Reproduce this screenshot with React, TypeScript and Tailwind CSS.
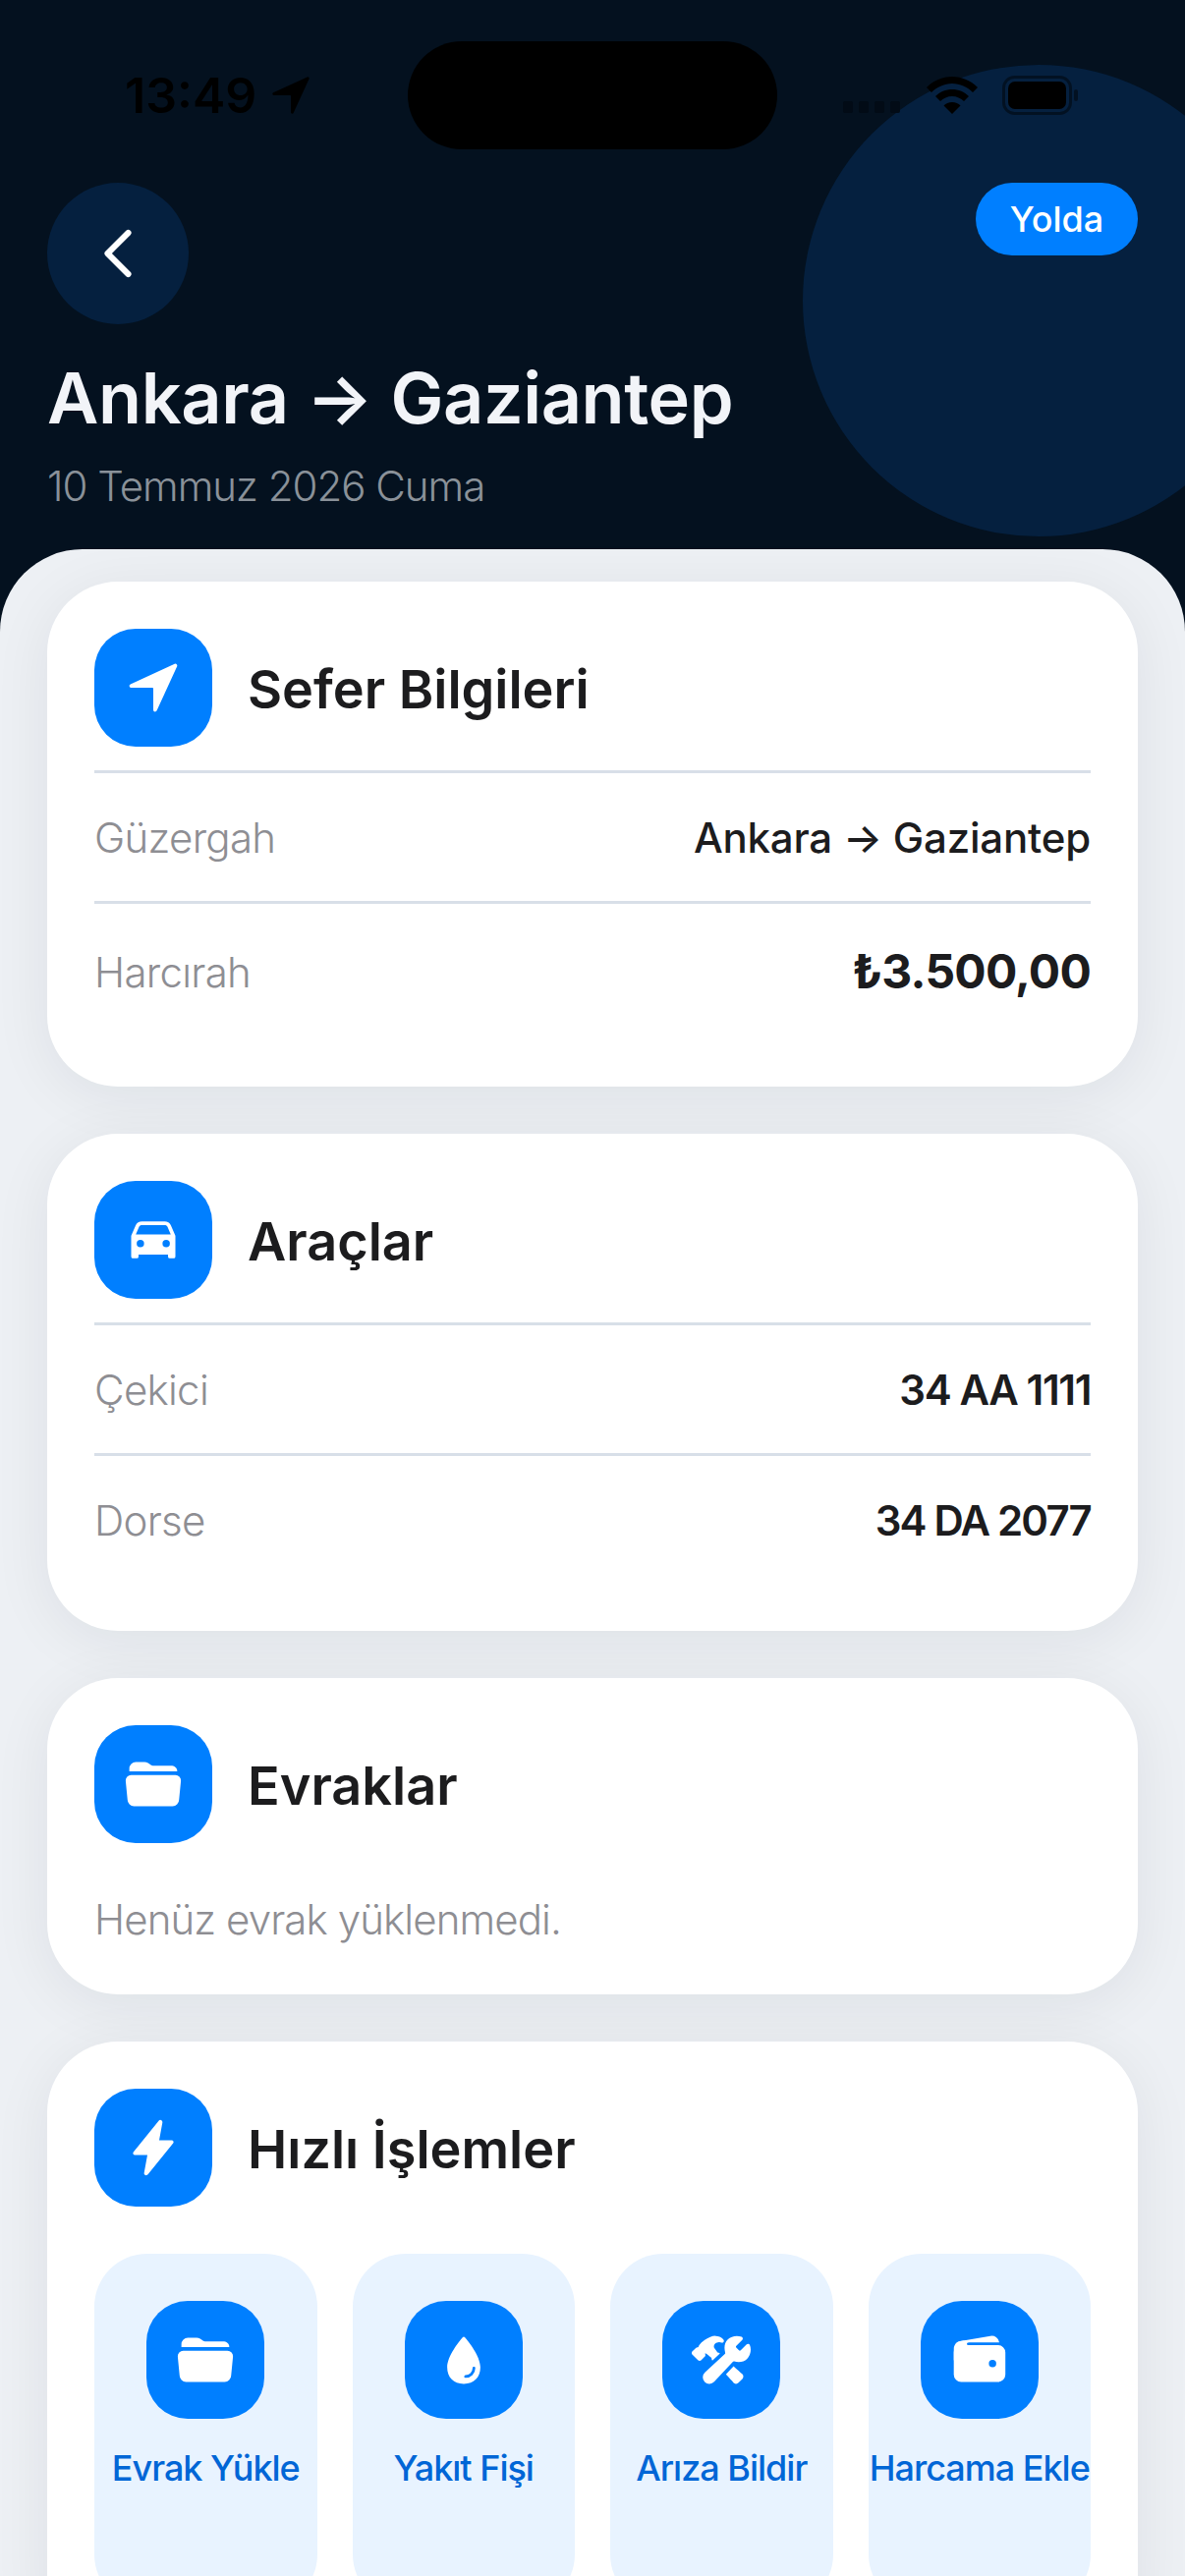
import { ReactNode } from "react";
import { ChevronLeft } from "lucide-react";
import {
  IoCar,
  IoConstruct,
  IoFlash,
  IoFolderOpen,
  IoNavigate,
  IoWallet,
  IoWater,
} from "react-icons/io5";

const actions = [
  { label: "Evrak Yükle", icon: <IoFolderOpen className="h-[60px] w-[60px]" /> },
  { label: "Yakıt Fişi", icon: <IoWater className="h-[60px] w-[60px]" /> },
  { label: "Arıza Bildir", icon: <IoConstruct className="h-[60px] w-[60px]" /> },
  { label: "Harcama Ekle", icon: <IoWallet className="h-[60px] w-[60px]" /> },
];

const IconBox = ({ children }: { children: ReactNode }) => (
  <div className="flex h-[120px] w-[120px] shrink-0 items-center justify-center rounded-[42px] bg-[#007fff] text-white">
    {children}
  </div>
);

const Card = ({ icon, title, children }: { icon: ReactNode; title: string; children: ReactNode }) => (
  <section className="rounded-[72px] bg-white p-[48px] shadow-[0_10px_60px_rgba(20,30,40,0.07)]">
    <div className="flex items-center gap-[36px]">
      <IconBox>{icon}</IconBox>
      <h2 className="mt-[4px] text-[54px] leading-[72px] font-semibold text-[#1c1c1e]">{title}</h2>
    </div>
    {children}
  </section>
);

const Row = ({ label, value, valueClass, tall }: { label: string; value: string; valueClass: string; tall?: boolean }) => (
  <div className={`flex items-center justify-between border-t-[3px] border-[#d8dfe8] ${tall ? "h-[141px]" : "h-[133px]"}`}>
    <span className="text-[42px] font-light tracking-[-0.7px] text-[#8e8e93]">{label}</span>
    <span className={valueClass}>{value}</span>
  </div>
);

const StatusBar = () => (
  <div className="flex h-[110px] items-center justify-center text-black">
    <div className="flex w-[322px] items-center pl-[34px]">
      <span className="text-[50px] leading-none font-semibold">13:49</span>
      <IoNavigate className="ml-[12px] h-[46px] w-[46px]" />
    </div>
    <div className="h-[110px] w-[376px] rounded-[55px] bg-black" />
    <div className="flex w-[322px] items-center justify-end gap-[25px] pr-[15px]">
      <svg width="60" height="12" viewBox="0 0 60 12" className="mt-[24px]" fill="#020b16">
        <rect x="0" y="0" width="10" height="12" rx="2" />
        <rect x="16" y="0" width="10" height="12" rx="2" />
        <rect x="32" y="0" width="10" height="12" rx="2" />
        <rect x="48" y="0" width="10" height="12" rx="2" />
      </svg>
      <svg width="52" height="38" viewBox="0 0 52 38" fill="#000">
        <path d="M26 0C16 0 7 4 0 11l5 5c5.500-5.500 13-9 21-9s15.500 3.500 21 9l5-5C45 4 36 0 26 0Z" />
        <path d="M26 13c-6.500 0-12.500 2.600-17 7l5 5c3-3 7.400-5 12-5s9 2 12 5l5-5c-4.500-4.400-10.500-7-17-7Z" />
        <path d="M26 26c-3.500 0-6.500 1.300-8.500 3.500L26 38l8.500-8.500C32.500 27.300 29.500 26 26 26Z" />
      </svg>
      <svg width="78" height="40" viewBox="0 0 78 40">
        <rect x="1.500" y="1.500" width="68" height="37" rx="11" fill="none" stroke="#000" strokeOpacity="0.45" strokeWidth="3" />
        <rect x="6" y="6" width="59" height="28" rx="7" fill="#000" />
        <rect x="73" y="14" width="4" height="12" rx="2" fill="#000" fillOpacity="0.45" />
      </svg>
    </div>
  </div>
);

export default function App() {
  return (
    <div className="relative h-[2622px] w-[1206px] overflow-hidden bg-[#04111f] font-['Inter',sans-serif]">
      <div className="absolute top-[66px] left-[817px] h-[480px] w-[480px] rounded-full bg-[#05203f]" />

      <header className="relative h-[559px] pt-[42px]">
        <StatusBar />
        <div className="mt-[34px] flex items-start justify-between px-[48px]">
          <button className="flex h-[144px] w-[144px] items-center justify-center rounded-full bg-[#05203f] text-white">
            <ChevronLeft className="h-[84px] w-[84px]" strokeWidth={1.75} />
          </button>
          <span className="flex h-[74px] w-[165px] items-center justify-center rounded-full bg-[#007fff] text-[36px] font-medium text-white">
            Yolda
          </span>
        </div>
        <h1 className="mt-[31px] px-[48px] text-[72px] leading-[88px] font-semibold tracking-[-0.4px] text-[#f2f4f8]">
          Ankara → Gaziantep
        </h1>
        <p className="mt-[18px] px-[48px] text-[42px] leading-[56px] font-light tracking-[-1px] text-[#8a9199]">
          10 Temmuz 2026 Cuma
        </p>
      </header>

      <main className="relative flex h-[2063px] flex-col gap-[48px] rounded-t-[84px] bg-[#edf0f4] px-[48px] pt-[33px]">
        <Card icon={<IoNavigate className="h-[60px] w-[60px]" />} title="Sefer Bilgileri">
          <div className="mt-[24px]">
            <Row
              label="Güzergah"
              value="Ankara → Gaziantep"
              valueClass="text-[42px] font-medium tracking-[-0.2px] text-[#1c1c1e]"
            />
            <Row
              label="Harcırah"
              value="₺3.500,00"
              valueClass="text-[48px] font-bold tracking-[-0.8px] text-[#1c1c1e]"
              tall
            />
          </div>
        </Card>

        <Card icon={<IoCar className="h-[60px] w-[60px]" />} title="Araçlar">
          <div className="mt-[24px]">
            <Row label="Çekici" value="34 AA 1111" valueClass="text-[42px] font-semibold tracking-[-1.4px] text-[#1c1c1e]" />
            <Row label="Dorse" value="34 DA 2077" valueClass="text-[42px] font-semibold tracking-[-1.8px] text-[#1c1c1e]" />
          </div>
        </Card>

        <Card icon={<IoFolderOpen className="h-[60px] w-[60px]" />} title="Evraklar">
          <p className="mt-[50px] text-[42px] leading-[56px] font-light tracking-[-0.9px] text-[#8e8e93]">
            Henüz evrak yüklenmedi.
          </p>
        </Card>

        <Card icon={<IoFlash className="h-[60px] w-[60px]" />} title="Hızlı İşlemler">
          <div className="mt-[48px] grid grid-cols-4 gap-[36px]">
            {actions.map((action) => (
              <div key={action.label} className="flex h-[360px] flex-col items-center rounded-[54px] bg-[#e8f3ff] pt-[48px]">
                <IconBox>{action.icon}</IconBox>
                <span className="mt-[26px] text-[36px] leading-[48px] font-medium tracking-[-1px] whitespace-nowrap text-[#0066d6]">
                  {action.label}
                </span>
              </div>
            ))}
          </div>
        </Card>
      </main>
    </div>
  );
}
